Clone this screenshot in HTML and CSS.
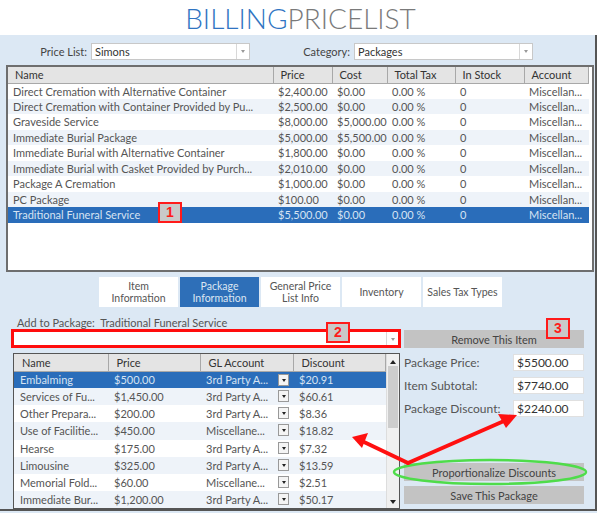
FILE: index.html
```html
<!DOCTYPE html>
<html lang="en">
<head>
    <meta charset="UTF-8">
    <title>Billing Pricelist</title>
    <link rel="stylesheet" href="styles.css">
</head>
<body>
<div class="app">
    <header class="title">
        <span class="t-blue">BILLING</span><span class="t-gray">PRICELIST</span>
    </header>

    <main class="panel">
        <div class="filters">
            <span class="f-label">Price List:</span>
            <div class="select sel-price"><span>Simons</span><i class="caret"></i></div>
            <span class="f-label f-cat">Category:</span>
            <div class="select sel-cat"><span>Packages</span><i class="caret"></i></div>
        </div>

        <div class="grid main-grid">
            <table>
                <colgroup>
                    <col style="width: 265px"><col style="width: 59px"><col style="width: 55px">
                    <col style="width: 68px"><col style="width: 69px"><col>
                </colgroup>
                <thead>
                    <tr><th>Name</th><th>Price</th><th>Cost</th><th>Total Tax</th><th>In Stock</th><th>Account</th></tr>
                </thead>
                <tbody>
                    <tr><td>Direct Cremation with Alternative Container</td><td>$2,400.00</td><td>$0.00</td><td>0.00 %</td><td>0</td><td>Miscellan...</td></tr>
                    <tr><td>Direct Cremation with Container Provided by Pu...</td><td>$2,500.00</td><td>$0.00</td><td>0.00 %</td><td>0</td><td>Miscellan...</td></tr>
                    <tr><td>Graveside Service</td><td>$8,000.00</td><td>$5,000.00</td><td>0.00 %</td><td>0</td><td>Miscellan...</td></tr>
                    <tr><td>Immediate Burial Package</td><td>$5,000.00</td><td>$5,500.00</td><td>0.00 %</td><td>0</td><td>Miscellan...</td></tr>
                    <tr><td>Immediate Burial with Alternative Container</td><td>$1,800.00</td><td>$0.00</td><td>0.00 %</td><td>0</td><td>Miscellan...</td></tr>
                    <tr><td>Immediate Burial with Casket Provided by Purch...</td><td>$2,010.00</td><td>$0.00</td><td>0.00 %</td><td>0</td><td>Miscellan...</td></tr>
                    <tr><td>Package A Cremation</td><td>$1,000.00</td><td>$0.00</td><td>0.00 %</td><td>0</td><td>Miscellan...</td></tr>
                    <tr><td>PC Package</td><td>$100.00</td><td>$0.00</td><td>0.00 %</td><td>0</td><td>Miscellan...</td></tr>
                    <tr class="selected"><td>Traditional Funeral Service</td><td>$5,500.00</td><td>$0.00</td><td>0.00 %</td><td>0</td><td>Miscellan...</td></tr>
                </tbody>
            </table>
        </div>

        <nav class="tabs">
            <div class="tab">Item<br>Information</div>
            <div class="tab active">Package<br>Information</div>
            <div class="tab">General Price<br>List Info</div>
            <div class="tab">Inventory</div>
            <div class="tab">Sales Tax Types</div>
        </nav>

        <section class="pkg">
            <div class="add-label">Add to Package:&nbsp; Traditional Funeral Service</div>
            <div class="select sel-item"><span></span><i class="caret"></i></div>
            <div class="btn btn-remove">Remove This Item</div>

            <div class="grid sub-grid">
                <table>
                    <colgroup>
                        <col style="width: 94px"><col style="width: 92px"><col style="width: 93px"><col>
                    </colgroup>
                    <thead>
                        <tr><th>Name</th><th>Price</th><th>GL Account</th><th>Discount</th></tr>
                    </thead>
                    <tbody>
                        <tr class="selected"><td>Embalming</td><td>$500.00</td><td class="gl">3rd Party A... <i class="drop"></i></td><td>$20.91</td></tr>
                        <tr><td>Services of Fu...</td><td>$1,450.00</td><td class="gl">3rd Party A... <i class="drop"></i></td><td>$60.61</td></tr>
                        <tr><td>Other Prepara...</td><td>$200.00</td><td class="gl">3rd Party A... <i class="drop"></i></td><td>$8.36</td></tr>
                        <tr><td>Use of Facilitie...</td><td>$450.00</td><td class="gl">Miscellane... <i class="drop"></i></td><td>$18.82</td></tr>
                        <tr><td>Hearse</td><td>$175.00</td><td class="gl">3rd Party A... <i class="drop"></i></td><td>$7.32</td></tr>
                        <tr><td>Limousine</td><td>$325.00</td><td class="gl">3rd Party A... <i class="drop"></i></td><td>$13.59</td></tr>
                        <tr><td>Memorial Fold...</td><td>$60.00</td><td class="gl">Miscellane... <i class="drop"></i></td><td>$2.51</td></tr>
                        <tr><td>Immediate Bur...</td><td>$1,200.00</td><td class="gl">3rd Party A... <i class="drop"></i></td><td>$50.17</td></tr>
                    </tbody>
                </table>
                <div class="scrollbar">
                    <i class="sb-up"></i>
                    <div class="sb-track"><div class="sb-thumb"></div></div>
                    <i class="sb-down"></i>
                </div>
            </div>

            <div class="totals">
                <div class="field"><span>Package Price:</span><div class="input">$5500.00</div></div>
                <div class="field"><span>Item Subtotal:</span><div class="input">$7740.00</div></div>
                <div class="field"><span>Package Discount:</span><div class="input">$2240.00</div></div>
                <div class="spacer"></div>
                <div class="btn">Proportionalize Discounts</div>
                <div class="btn btn-save">Save This Package</div>
            </div>
        </section>
    </main>

    <!-- callouts drawn over the screenshot -->
    <span class="badge b1">1</span>
    <span class="badge b2">2</span>
    <span class="badge b3">3</span>
    <svg class="annot" width="597" height="513" viewBox="0 0 597 513">
        <ellipse cx="490" cy="472" rx="96" ry="12" fill="none" stroke="#4fdc4a" stroke-width="2.5"/>
        <g stroke="#ff1010" stroke-width="4" fill="none" stroke-linecap="round">
            <line x1="408" y1="463" x2="364" y2="442"/>
            <line x1="408" y1="463" x2="504" y2="421"/>
        </g>
        <polygon points="352,437 368,433 362,448" fill="#ff1010"/>
        <polygon points="517,415 498,414 506,428" fill="#ff1010"/>
    </svg>
</div>
</body>
</html>
```

FILE: styles.css
```css
* {
    box-sizing: border-box;
}
body {
    margin: 0;
    font-family: "Lato", "DejaVu Sans", sans-serif;
    font-size: 11px;
    color: #555;
}
.app {
    position: relative;
    width: 597px;
    height: 513px;
    overflow: hidden;
    background: #dce8f4;
}
.title {
    height: 35px;
    background: #fff;
    text-align: center;
    font-family: "Lato", sans-serif;
    font-weight: 300;
    font-size: 28px;
    line-height: 36px;
    padding-left: 4px;
}
.t-blue {
    color: #2f74c2;
}
.t-gray {
    color: #7a7a7a;
}
.panel {
    height: 476px;
    padding: 8px 0 0 6px;
    border-right: 2px solid #555;
    border-bottom: 2px solid #555;
}
.filters {
    display: flex;
    align-items: center;
    height: 17px;
}
.f-label {
    width: 85px;
    text-align: right;
    padding-right: 4px;
    color: #444;
}
.f-cat {
    width: 104px;
}
.select {
    display: flex;
    align-items: center;
    justify-content: space-between;
    height: 17px;
    background: #fff;
    border: 1px solid #c8c8c8;
    padding-left: 3px;
    color: #333;
}
.sel-price {
    width: 159px;
}
.sel-cat {
    width: 179px;
}
.caret {
    width: 13px;
    height: 100%;
    border-left: 1px solid #d8d8d8;
    position: relative;
}
.caret::after {
    content: '';
    position: absolute;
    left: 4px;
    top: 6px;
    border: 2.5px solid transparent;
    border-top: 3px solid #999;
}
.grid {
    background: #fff;
}
.grid table {
    border-collapse: collapse;
    table-layout: fixed;
    width: 100%;
}
.grid th {
    background: #e4e4e4;
    font-weight: normal;
    color: #333;
    text-align: left;
    border-right: 1px solid #a8a8a8;
    border-bottom: 1px solid #a8a8a8;
    white-space: nowrap;
}
.grid td {
    white-space: nowrap;
    overflow: hidden;
}
.grid tbody tr:nth-child(even) {
    background: #eef3f9;
}
.grid tr.selected {
    background: #2a6dba;
    color: #d6e3f2;
}
.main-grid {
    margin-top: 5px;
    width: 588px;
    height: 207px;
    border: 2px solid #6e6e6e;
    padding-right: 3px;
}
.main-grid th {
    height: 16px;
    padding: 0 7px;
}
.main-grid td {
    height: 15.5px;
    padding: 0 0 0 5px;
}
.tabs {
    display: flex;
    gap: 2px;
    margin: 5px 0 0 93px;
    height: 30px;
}
.tab {
    width: 79px;
    background: #fff;
    display: flex;
    align-items: center;
    justify-content: center;
    text-align: center;
    font-size: 10.5px;
    line-height: 12px;
    color: #555;
}
.tab.active {
    background: #2e6fb8;
    color: #dce6f2;
}
.pkg {
    display: grid;
    grid-template-columns: 390px 180px;
    column-gap: 3px;
    margin-left: 5px;
}
.add-label {
    grid-column: 1 / 3;
    height: 22px;
    padding: 9px 0 0 6px;
    line-height: 13px;
    color: #555;
}
.sel-item {
    height: 19px;
    border: 3px solid #ff0d0d;
    padding: 0;
}
.sel-item .caret {
    width: 12px;
}
.btn {
    display: flex;
    align-items: center;
    justify-content: center;
    height: 18px;
    background: #c3c3c3;
    color: #444;
}
.btn-remove {
    margin-top: 1px;
}
.sub-grid {
    display: flex;
    margin: 5px 0 0 2px;
    width: 387px;
    height: 156px;
    border: 1px solid #555;
}
.sub-grid table {
    width: 373px;
}
.sub-grid th {
    height: 17px;
    padding: 0 8px;
}
.sub-grid td {
    height: 16.8px;
    padding: 0 6px;
}
.sub-grid td.gl {
    position: relative;
}
.drop {
    position: absolute;
    right: 4px;
    top: 2px;
    width: 11px;
    height: 12px;
    background: #f4f4f4;
    border: 1px solid #999;
}
.drop::after {
    content: '';
    position: absolute;
    left: 3px;
    top: 4px;
    border: 2px solid transparent;
    border-top: 3px solid #222;
}
.scrollbar {
    width: 13px;
    display: flex;
    flex-direction: column;
    background: #f0f0f0;
    border-left: 1px solid #ddd;
}
.sb-up, .sb-down {
    height: 12px;
    position: relative;
}
.sb-up::after {
    content: '';
    position: absolute;
    left: 3px;
    top: 3px;
    border: 3px solid transparent;
    border-bottom: 4px solid #222;
}
.sb-down::after {
    content: '';
    position: absolute;
    left: 3px;
    top: 4px;
    border: 3px solid transparent;
    border-top: 4px solid #222;
}
.sb-track {
    flex: 1;
}
.sb-thumb {
    margin: 0 1px;
    height: 62px;
    background: #cdcdcd;
}
.totals {
    display: flex;
    flex-direction: column;
    margin-top: 5px;
    padding-bottom: 5px;
    font-size: 12px;
    color: #555;
}
.field {
    display: flex;
    justify-content: space-between;
    align-items: center;
    height: 19px;
    margin-bottom: 4px;
}
.input {
    width: 71px;
    height: 17px;
    background: #fff;
    border: 1px solid #e0e0e0;
    color: #333;
    padding-left: 3px;
    line-height: 15px;
}
.spacer {
    flex: 1;
}
.totals .btn {
    font-size: 11px;
}
.totals .btn-save {
    margin-top: 5px;
}
.badge {
    position: absolute;
    width: 24px;
    height: 21px;
    background: #c9c9c9;
    border: 2px solid #ff1a1a;
    color: #ff1a1a;
    font: bold 14px "Liberation Sans", sans-serif;
    text-align: center;
    line-height: 17px;
}
.b1 {
    left: 158px;
    top: 202px;
}
.b2 {
    left: 326px;
    top: 322px;
}
.b3 {
    left: 546px;
    top: 318px;
}
.annot {
    position: absolute;
    left: 0;
    top: 0;
    pointer-events: none;
}
```
